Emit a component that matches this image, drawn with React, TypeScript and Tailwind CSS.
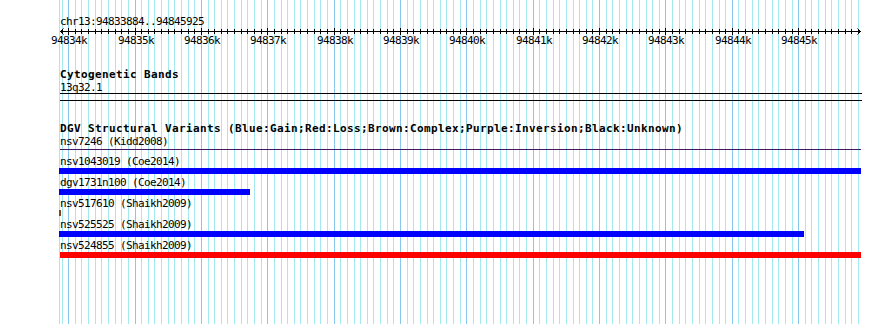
import React from "react";

const START = 94833884;
const X0 = 61;
const SCALE = 0.066364;
const px = (p: number) => X0 + (p - START) * SCALE;

const minor: number[] = [];
for (let p = 94833900; p <= 94845900; p += 100) minor.push(p);
const majors = minor.filter((p) => p % 1000 === 0);

const reg = "font-['DejaVu_Sans_Mono',monospace] text-[11px] tracking-[-0.62px] text-black whitespace-pre";
const bold = "font-['DejaVu_Sans_Mono',monospace] font-bold text-[11px] tracking-[0.377px] text-black whitespace-pre";

type Row = { label: string; left: number; width: number; color: string };
const rows: Row[] = [
  { label: "nsv1043019 (Coe2014)", left: -1, width: 802, color: "bg-[#0000ff]" },
  { label: "dgv1731n100 (Coe2014)", left: -1, width: 191, color: "bg-[#0000ff]" },
  { label: "nsv517610 (Shaikh2009)", left: -1, width: 2, color: "bg-[#8b4513]" },
  { label: "nsv525525 (Shaikh2009)", left: -1, width: 745, color: "bg-[#0000ff]" },
  { label: "nsv524855 (Shaikh2009)", left: 0, width: 801, color: "bg-[#ff0000]" },
];

export default function App() {
  return (
    <div className="relative w-[890px] h-[324px] bg-white overflow-hidden">
      <svg className="absolute inset-0" width={890} height={324}>
        <line x1={59.5} y1={0} x2={59.5} y2={324} stroke="#a4e8f0" />
        {minor.map((p) => {
          const x = Math.floor(px(p)) + 0.5;
          const maj = p % 1000 === 0;
          return <line key={p} x1={x} x2={x} y1={0} y2={324} stroke={maj ? "#88c8ee" : "#a4e8f0"} />;
        })}
      </svg>

      <div className="relative ml-[60px] w-[802px] flex flex-col">
        <div className="h-[15px]" />
        <div className={`${reg} h-[13px] leading-[13px]`}>chr13:94833884..94845925</div>
        <svg width={802} height={6} className="overflow-visible">
          <line x1={0} x2={801} y1={3.5} y2={3.5} stroke="#000" />
          <polyline points="3.5,0.5 0.5,3.5 3.5,6.5" fill="none" stroke="#000" />
          <polyline points="797.5,0.5 800.5,3.5 797.5,6.5" fill="none" stroke="#000" />
          {minor.map((p) => {
            const x = Math.floor(px(p)) + 0.5 - 60;
            const maj = p % 1000 === 0;
            return <line key={p} x1={x} x2={x} y1={maj ? 0 : 1} y2={maj ? 7 : 6} stroke="#000" />;
          })}
        </svg>
        <div className="relative h-[13px]">
          {majors.map((p) => (
            <div
              key={p}
              className={`${reg} absolute top-0 leading-[13px] w-[36px] text-center`}
              style={{ left: Math.floor(px(p)) - 60 - 17 }}
            >
              {`${Math.round(p / 1000)}k`}
            </div>
          ))}
        </div>

        <div className="h-[21px]" />
        <div className={`${bold} h-[13px] leading-[13px]`}>Cytogenetic Bands</div>
        <div className={`${reg} h-[12px] leading-[13px]`}>13q32.1</div>
        <div className="h-[8px] w-[802px] border-y border-black" />

        <div className="h-[21px]" />
        <div className={`${bold} h-[13px] leading-[13px]`}>
          DGV Structural Variants (Blue:Gain;Red:Loss;Brown:Complex;Purple:Inversion;Black:Unknown)
        </div>
        <div className={`${reg} h-[13px] leading-[13px]`}>nsv7246 (Kidd2008)</div>
        <div className="h-[1px]" />
        <div className="h-[1px] w-[801px] bg-[#401a60]" />
        <div className="h-[6px]" />

        <div className="flex flex-col gap-[3px]">
          {rows.map((r) => (
            <div key={r.label} className="flex flex-col">
              <div className={`${reg} h-[12px] leading-[12px]`}>{r.label}</div>
              <div className={`h-[6px] ${r.color}`} style={{ marginLeft: r.left, width: r.width }} />
            </div>
          ))}
        </div>
      </div>
    </div>
  );
}
